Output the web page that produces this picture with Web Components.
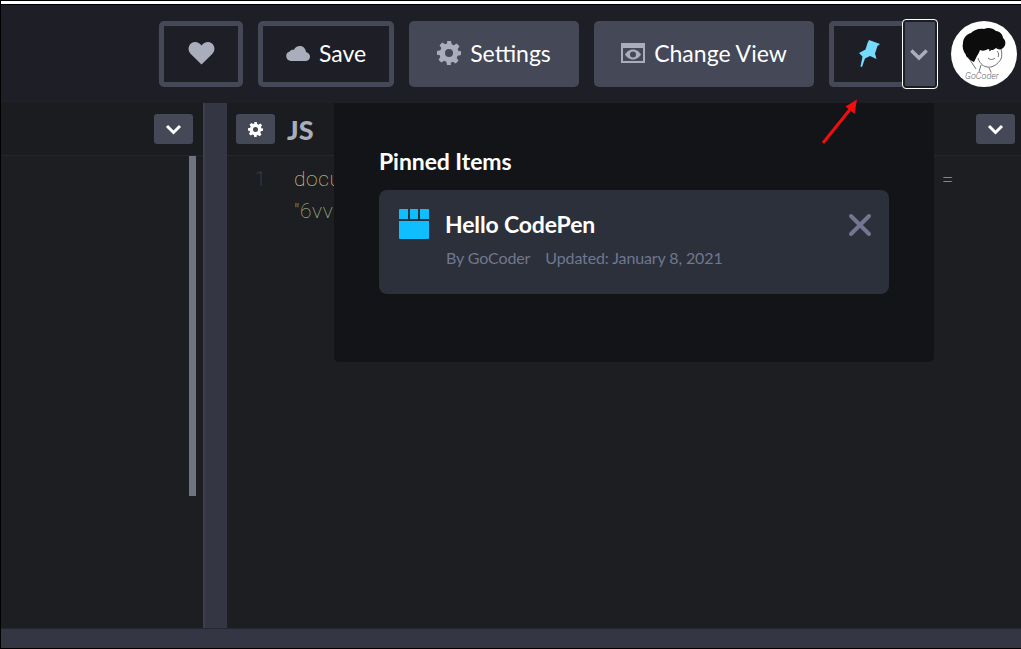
<!DOCTYPE html>
<html>
<head>
<meta charset="utf-8">
<title>CodePen pinned items</title>
<style>
  html, body { margin: 0; height: 100%; background: #000; overflow: hidden; }
  body { font-family: Lato, "Liberation Sans", sans-serif; }
</style>
</head>
<body>
<pen-app>
  <pen-header slot="header">
    <pen-button variant="outline" style="width:84px"><svg viewBox="0 0 28 25" width="27" height="24"><path fill="#aaaebc" d="M14 24.500 2.600 13.200C-.6 9.800.1 4.600 3.400 2.300 6.800-.1 11.400 1 14 4.700 16.600 1 21.200-.1 24.600 2.300c3.300 2.300 4 7.500.8 10.900z"/></svg></pen-button>
    <pen-button variant="outline" style="width:136px"><svg viewBox="0 0 24 15" width="24" height="15"><path fill="#aaaebc" d="M5 15a4.800 4.800 0 0 1-1.300-9.400C4.700 4 6.200 3.600 7.700 4 9 1.500 11.200 0 13.800 0c3.400 0 6 2.600 6.200 6.100 2.300.6 4 2.400 4 4.600 0 2.500-2 4.300-4.500 4.300z"/></svg><span>Save</span></pen-button>
    <pen-button style="width:170px"><svg viewBox="0 0 24 24" width="24" height="24"><path fill="#aaaebc" fill-rule="evenodd" d="M10 0h4l.7 3.300 2.100.9 2.900-1.800 2.800 2.800-1.800 2.900.9 2.100L24 10v4l-3.400.8-.9 2.100 1.800 2.900-2.800 2.800-2.900-1.800-2.100.9L14 24h-4l-.7-3.300-2.100-.9-2.900 1.800-2.800-2.800 1.800-2.900-.9-2.100L0 14v-4l3.400-.8.900-2.100-1.800-2.900 2.800-2.800 2.900 1.800 2.100-.9zM12 8a4 4 0 1 0 0 8 4 4 0 0 0 0-8z"/></svg><span>Settings</span></pen-button>
    <pen-button style="width:220px"><svg viewBox="0 0 24 20" width="24" height="20"><path fill="#aaaebc" fill-rule="evenodd" d="M0 0h24v20H0zM2 5v13h20V5zM12 6.500c3.700 0 6.500 2.500 8 5-1.500 2.500-4.300 5-8 5s-6.500-2.500-8-5c1.500-2.500 4.300-5 8-5zM12 8.500a3 3 0 1 0 0 6 3 3 0 0 0 0-6z"/></svg><span>Change View</span></pen-button>
    <pen-pin-group></pen-pin-group>
    <pen-avatar></pen-avatar>
  </pen-header>
  <pen-editor-panel slot="left" side="left" scrollbar></pen-editor-panel>
  <pen-editor-panel slot="right" label="JS" code></pen-editor-panel>
  <pen-pinned-menu slot="menu"></pen-pinned-menu>
  <svg slot="arrow" viewBox="0 0 42 48" width="42" height="48"><path d="M4 44 33 8" stroke="#f00e0e" stroke-width="3" fill="none"/><path fill="#f00e0e" d="M38 .5 35.500 15 26.500 7.500z"/></svg>
</pen-app>

<script>
const caret = (color, w = 17, h = 11) => `<svg viewBox="0 0 17 11" width="${w}" height="${h}"><path d="M2 2l6.500 6.500L15 2" fill="none" stroke="${color}" stroke-width="3"/></svg>`;

class PenApp extends HTMLElement {
  constructor() {
    super();
    this.attachShadow({ mode: "open" }).innerHTML = `
      <style>
        :host { display: block; position: relative; width: 1021px; height: 649px; background: #000; overflow: hidden; }
        .frame { display: flex; flex-direction: column; height: 648px; padding-left: 1px; box-sizing: border-box; }
        .strip { height: 3px; background: #fff; margin: 1px 0; flex: none; }
        .body { flex: 1; display: flex; min-height: 0; }
        .gutter { width: 24px; flex: none; background: #343643; border-left: 2px solid #3d3f4c; box-sizing: border-box; }
        .foot { height: 20px; flex: none; background: #343643; border-top: 1px solid #26272e; box-sizing: border-box; }
        .menu { position: absolute; left: 334px; top: 103px; }
        .arrow { position: absolute; left: 819px; top: 99px; }
      </style>
      <div class="frame">
        <div class="strip"></div>
        <slot name="header"></slot>
        <div class="body">
          <slot name="left"></slot>
          <div class="gutter"></div>
          <slot name="right"></slot>
        </div>
        <div class="foot"></div>
      </div>
      <div class="menu"><slot name="menu"></slot></div>
      <div class="arrow"><slot name="arrow"></slot></div>`;
  }
}

class PenHeader extends HTMLElement {
  constructor() {
    super();
    this.attachShadow({ mode: "open" }).innerHTML = `
      <style>
        :host { display: flex; flex: none; height: 98px; background: #1e1f26; box-sizing: border-box;
          padding: 16px 4px 0 0; justify-content: flex-end; align-items: flex-start; gap: 15px; }
      </style>
      <slot></slot>`;
  }
}

class PenButton extends HTMLElement {
  constructor() {
    super();
    this.attachShadow({ mode: "open" }).innerHTML = `
      <style>
        :host { display: flex; align-items: center; justify-content: center; gap: 9px; height: 66px; box-sizing: border-box;
          background: #444857; border-radius: 5px; color: #fff; font: 400 23px Lato, "Liberation Sans", sans-serif; padding-bottom: 2px; }
        :host([variant="outline"]) { background: #1e1f26; border: 5px solid #444857; }
      </style>
      <slot></slot>`;
  }
}

class PenPinGroup extends HTMLElement {
  constructor() {
    super();
    this.attachShadow({ mode: "open" }).innerHTML = `
      <style>
        :host { display: flex; position: relative; width: 109px; height: 66px; margin-right: -2px; }
        .pin { width: 80px; height: 66px; box-sizing: border-box; border: 5px solid #444857; border-right: 0; border-radius: 5px 0 0 5px;
          display: flex; align-items: center; justify-content: center; padding: 0 4px 1px 0; background: #1e1f26; }
        .more { position: absolute; left: 73px; top: -2px; width: 36px; height: 70px; box-sizing: border-box;
          background: #444857; border: 1px solid #fff; box-shadow: inset 0 0 0 2px #1e1f26; border-radius: 4px;
          display: flex; align-items: center; justify-content: center; padding-right: 2px; }
      </style>
      <div class="pin"><svg viewBox="0 0 21 27" width="21" height="27"><path fill="#76daff" d="M10 0 21 4l-2.500 2-2.500 7.500 1.500 5.500-6.500-3-5 2.500L3 27l-1.500-.6L3.500 16.500 0 13l6.500-3.500L8.500 3z"/></svg></div>
      <div class="more">${caret("#aaaebc", 20, 13)}</div>`;
  }
}

class PenAvatar extends HTMLElement {
  constructor() {
    super();
    this.attachShadow({ mode: "open" }).innerHTML = `
      <style>
        :host { display: block; width: 66px; height: 66px; border-radius: 50%; background: #fff; overflow: hidden; }
        svg { display: block; }
        text { font: italic 300 9px Roboto, "Liberation Sans", sans-serif; fill: #666; }
      </style>
      <svg viewBox="0 0 66 66" width="66" height="66">
        <path fill="#0c0c0c" d="M15 34c-3-4-4-8-3-12 0-5 4-9 8-10 3-3 8-5 13-4 4-2 9-1 12 2 4 0 7 4 7 7 3 2 3 7 1 9-2 3-6 3-8 1-2 2-5 3-8 1-3 2-6 2-8 1-1 3-2 4-3 6l-3 6c-3-1-5-3-8-6z"/>
        <path fill="none" stroke="#333" stroke-width=".7" d="M27 37c1 4 4 8 9 9 6 1 11-3 14-8 1-3 1-6 0-10M17 36l8 12M30 44l-2 7M38 47l2 4"/>
        <path fill="none" stroke="#333" stroke-width=".7" d="M37 37c2 2 5 2 7 0M46 30c2 2 2 4 1 6"/>
        <circle cx="39" cy="29" r="1" fill="#222"/><circle cx="47" cy="27" r="1" fill="#222"/>
        <text x="14" y="58">GoCoder</text>
      </svg>`;
  }
}

class PenEditorPanel extends HTMLElement {
  constructor() {
    super();
    const root = this.attachShadow({ mode: "open" });
    const label = this.getAttribute("label");
    const isCode = this.hasAttribute("code");
    root.innerHTML = `
      <style>
        :host { display: flex; flex-direction: column; flex: 1; min-width: 0; position: relative; background: #1d1e22; }
        :host([side="left"]) { flex: none; width: 202px; }
        :host([side="left"]) .end { margin-right: 10px; }
        .head { height: 53px; flex: none; box-sizing: border-box; background: #1b1c1f; border-bottom: 1px solid #26272b;
          display: flex; align-items: flex-start; padding-top: 11px; }
        .left { display: flex; align-items: flex-start; gap: 12px; padding-left: 9px; }
        .chip { width: 39px; height: 30px; background: #444857; border-radius: 3px; display: flex; align-items: center; justify-content: center; }
        .title { color: #aaaebc; font: 900 27px Lato, "Liberation Sans", sans-serif; line-height: 32px; }
        .end { margin-left: auto; margin-right: 6px; }
        .code { flex: 1; display: flex; font: 100 21px Roboto, "Liberation Mono", monospace; position: relative; }
        .nums { width: 39px; text-align: right; color: #55565b; padding-top: 7px; line-height: 32px; }
        .lines { padding: 7px 0 0 28px; white-space: pre; line-height: 32px; flex: 1; display: flex; justify-content: space-between; letter-spacing: .6px; }
        .yel { color: #e2da88; } .grn { color: #aac893; }
        .eq { color: #cfcfd2; margin-right: 67px; }
        .bar { position: absolute; top: 0; right: 7px; width: 7px; height: 340px; background: #6f7482; }
      </style>
      <div class="head">
        ${label ? `<div class="left"><div class="chip"><svg viewBox="0 0 24 24" width="15" height="15"><path fill="#fff" fill-rule="evenodd" d="M10 0h4l.7 3.300 2.100.9 2.900-1.800 2.800 2.800-1.800 2.900.9 2.100L24 10v4l-3.400.8-.9 2.100 1.800 2.900-2.800 2.800-2.900-1.800-2.100.9L14 24h-4l-.7-3.300-2.100-.9-2.900 1.800-2.800-2.800 1.800-2.900-.9-2.100L0 14v-4l3.400-.8.900-2.100-1.800-2.900 2.800-2.800 2.900 1.800 2.100-.9zM12 8a4 4 0 1 0 0 8 4 4 0 0 0 0-8z"/></svg></div><span class="title">${label}</span></div>` : ""}
        <div class="end chip">${caret("#fff")}</div>
      </div>
      <div class="code">
        ${isCode ? `<div class="nums">1</div><div class="lines"><div><span class="yel">document</span>
<span class="grn">"6vv</span></div><span class="eq">=</span></div>` : `<div class="bar"></div>`}
      </div>`;
  }
}

class PenPinnedMenu extends HTMLElement {
  constructor() {
    super();
    this.attachShadow({ mode: "open" }).innerHTML = `
      <style>
        :host { display: block; width: 600px; height: 259px; box-sizing: border-box; background: #131417;
          border-radius: 0 0 5px 5px; padding: 44px 45px; color: #fff; font-family: Lato, "Liberation Sans", sans-serif; }
        h2 { margin: 0 0 15px; font-size: 23px; font-weight: 700; line-height: 28px; letter-spacing: -0.08px; }
      </style>
      <h2>Pinned Items</h2>
      <pen-pinned-item name="Hello CodePen" author="By GoCoder" updated="Updated: January 8, 2021"></pen-pinned-item>`;
  }
}

class PenPinnedItem extends HTMLElement {
  constructor() {
    super();
    const a = (n) => this.getAttribute(n);
    this.attachShadow({ mode: "open" }).innerHTML = `
      <style>
        :host { display: flex; position: relative; width: 510px; height: 104px; box-sizing: border-box; background: #2c303a;
          border-radius: 8px; padding: 19px 20px; gap: 16px; }
        .body { display: flex; flex-direction: column; }
        .name { font-size: 23px; font-weight: 700; line-height: 30px; color: #fff; letter-spacing: -0.15px; }
        .meta { display: flex; gap: 15px; margin-top: 9px; padding-left: 1px; font-size: 16px; line-height: 20px; color: #717790; letter-spacing: -0.12px; }
        .close { position: absolute; right: 17px; top: 23px; display: block; }
      </style>
      <svg viewBox="0 0 30 30" width="30" height="30"><path fill="#0ebeff" d="M1 0h8v10H0V1a1 1 0 0 1 1-1zM11 0h8v10h-8zM21 0h8a1 1 0 0 1 1 1v9h-9zM0 12h30v17a1 1 0 0 1-1 1H1a1 1 0 0 1-1-1z"/></svg>
      <div class="body">
        <div class="name">${a("name")}</div>
        <div class="meta"><span>${a("author")}</span><span>${a("updated")}</span></div>
      </div>
      <svg class="close" viewBox="0 0 24 24" width="24" height="24"><path d="M3 3l18 18M21 3 3 21" stroke="#717790" stroke-width="4" stroke-linecap="round"/></svg>`;
  }
}

customElements.define("pen-app", PenApp);
customElements.define("pen-header", PenHeader);
customElements.define("pen-button", PenButton);
customElements.define("pen-pin-group", PenPinGroup);
customElements.define("pen-avatar", PenAvatar);
customElements.define("pen-editor-panel", PenEditorPanel);
customElements.define("pen-pinned-item", PenPinnedItem);
customElements.define("pen-pinned-menu", PenPinnedMenu);
</script>
</body>
</html>
